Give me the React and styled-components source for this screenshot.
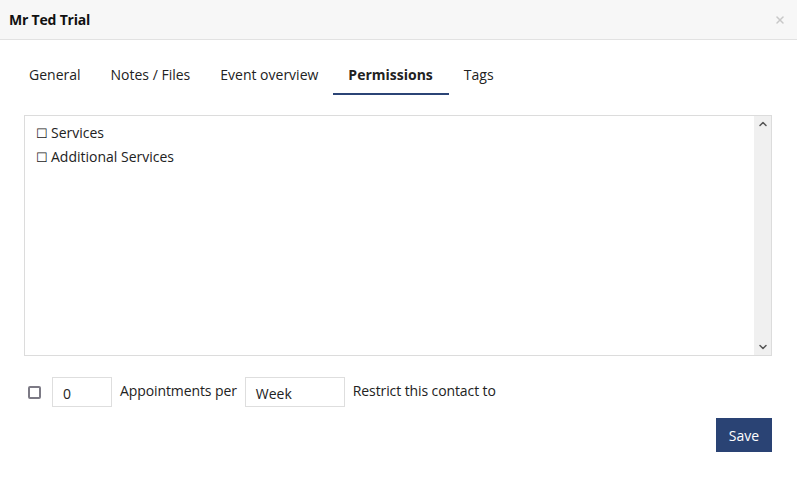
import React from 'react';
import styled, { createGlobalStyle } from 'styled-components';
import { FiChevronUp, FiChevronDown, FiX } from 'react-icons/fi';

const Global = createGlobalStyle`
	body {
		margin: 0;
		background: #ffffff;
		font-family: 'Open Sans', 'Noto Sans', sans-serif;
		font-size: 14px;
		color: #333;
	}
`;

const Dialog = styled.div`
	width: 797px;
	height: 496px;
	background: #fff;
`;

const Header = styled.div`
	height: 39px;
	border-bottom: 1px solid #e2e2e2;
	background: #f7f7f7;
	display: flex;
	align-items: center;
	justify-content: space-between;
	padding: 0 11px 0 9px;
	box-sizing: content-box;

	h1 {
		margin: 0;
		font-size: 14px;
		font-weight: 700;
		color: #111;
		letter-spacing: -0.2px;
	}
`;

const Close = styled.span`
	color: #c8c8c8;
	display: flex;
	font-size: 12px;
`;

const Tabs = styled.div`
	display: flex;
	padding: 14px 0 0 14px;
`;

const Tab = styled.div`
	padding: 11px 15px 8px;
	line-height: 20px;
	color: #222;
	font-weight: ${(p) => (p.active ? 700 : 400)};
	padding-right: ${(p) => (p.active ? '16px' : '15px')};
	border-bottom: 2px solid ${(p) => (p.active ? '#2b4476' : 'transparent')};
`;

const ListBox = styled.div`
	margin: 20px 25px 0 24px;
	height: 241px;
	box-sizing: border-box;
	border: 1px solid #dcdcdc;
	display: flex;
`;

const List = styled.div`
	flex: 1;
	padding: 5px 0 0 11px;
`;

const Item = styled.div`
	line-height: 23px;
	color: #222;

	span {
		font-size: 13px;
		margin-right: 3px;
	}
`;

const Scrollbar = styled.div`
	width: 17px;
	background: #f0f0f0;
	display: flex;
	flex-direction: column;
	justify-content: space-between;
	align-items: center;
	padding: 2px 0;
	color: #555;
	font-size: 12px;
`;

const Row = styled.div`
	display: flex;
	align-items: center;
	gap: 8px;
	margin-top: 21px;
	padding-left: 28px;
	color: #222;
`;

const Check = styled.span`
	width: 13px;
	height: 13px;
	box-sizing: border-box;
	border: 2px solid #7c7a85;
	border-radius: 2px;
	margin-right: 3px;
`;

const Field = styled.div`
	width: ${(p) => p.w}px;
	height: 30px;
	box-sizing: border-box;
	border: 1px solid #dedede;
	padding: 2px 10px 0;
	display: flex;
	align-items: center;
`;

const Label = styled.span`
	margin-top: -4px;
	letter-spacing: -0.1px;
`;

const Footer = styled.div`
	display: flex;
	justify-content: flex-end;
	padding-right: 25px;
	margin-top: 11px;
`;

const SaveButton = styled.button`
	width: 56px;
	height: 34px;
	background: #2a4374;
	color: #fff;
	border: none;
	font-family: 'Open Sans', sans-serif;
	font-size: 14px;
	padding: 0;
`;

export default function App() {
	const tabs = ['General', 'Notes / Files', 'Event overview', 'Permissions', 'Tags'];
	return (
		<Dialog>
			<Global />
			<Header>
				<h1>Mr Ted Trial</h1>
				<Close><FiX strokeWidth={3} /></Close>
			</Header>
			<Tabs>
				{tabs.map((t) => (
					<Tab key={t} active={t === 'Permissions'}>
						{t}
					</Tab>
				))}
			</Tabs>
			<ListBox>
				<List>
					<Item><span>☐</span>Services</Item>
					<Item><span>☐</span>Additional Services</Item>
				</List>
				<Scrollbar>
					<FiChevronUp strokeWidth={3} />
					<FiChevronDown strokeWidth={3} />
				</Scrollbar>
			</ListBox>
			<Row>
				<Check />
				<Field w={60}>0</Field>
				<Label>Appointments per</Label>
				<Field w={100}>Week</Field>
				<Label>Restrict this contact to</Label>
			</Row>
			<Footer>
				<SaveButton>Save</SaveButton>
			</Footer>
		</Dialog>
	);
}
